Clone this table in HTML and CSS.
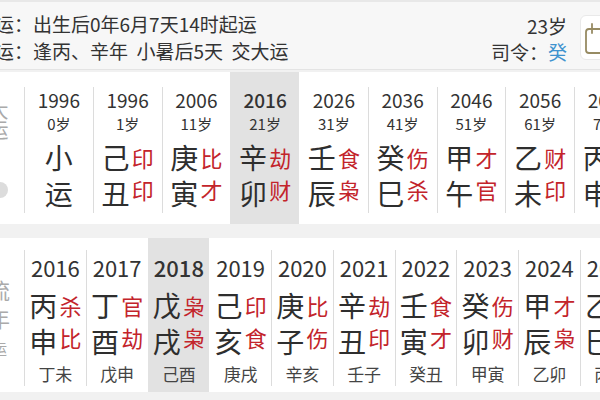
FILE: index.html
```html
<!DOCTYPE html>
<html lang="zh-CN">
<head>
<meta charset="utf-8">
<link rel="stylesheet" href="styles.css">
</head>
<body>
<header class="top">
  <div class="info">
    <div class="line">起运：出生后0年6月7天14时起运</div>
    <div class="line">交运：逢丙、辛年&nbsp;&nbsp;小暑后5天&nbsp;&nbsp;交大运</div>
  </div>
  <div class="meta">
    <div>23岁</div>
    <div>司令：<span class="blue">癸</span></div>
  </div>
  <div class="iconbox">
    <svg width="40" height="45" viewBox="0 0 40 45" fill="none" stroke="#978b63" stroke-width="1.8" stroke-linecap="round">
      <rect x="5" y="13" width="24" height="24" rx="3"/>
      <line x1="11" y1="8" x2="11" y2="17"/>
      <line x1="23" y1="8" x2="23" y2="17"/>
    </svg>
  </div>
</header>

<section class="card dayun">
  <div class="side"><span class="vt">大运</span><span class="dot"></span></div>
  <div class="col"><div class="in"><div class="yr">1996</div><div class="age">0岁</div><div class="gz"><span class="c">小</span></div><div class="gz"><span class="c">运</span></div></div></div>
  <div class="col"><div class="in"><div class="yr">1996</div><div class="age">1岁</div><div class="gz"><span class="c">己</span><span class="r">印</span></div><div class="gz lo"><span class="c">丑</span><span class="r">印</span></div></div></div>
  <div class="col"><div class="in"><div class="yr">2006</div><div class="age">11岁</div><div class="gz"><span class="c">庚</span><span class="r">比</span></div><div class="gz lo"><span class="c">寅</span><span class="r">才</span></div></div></div>
  <div class="col hl"><div class="in"><div class="yr">2016</div><div class="age">21岁</div><div class="gz"><span class="c">辛</span><span class="r">劫</span></div><div class="gz lo"><span class="c">卯</span><span class="r">财</span></div></div></div>
  <div class="col"><div class="in"><div class="yr">2026</div><div class="age">31岁</div><div class="gz"><span class="c">壬</span><span class="r">食</span></div><div class="gz lo"><span class="c">辰</span><span class="r">枭</span></div></div></div>
  <div class="col"><div class="in"><div class="yr">2036</div><div class="age">41岁</div><div class="gz"><span class="c">癸</span><span class="r">伤</span></div><div class="gz lo"><span class="c">巳</span><span class="r">杀</span></div></div></div>
  <div class="col"><div class="in"><div class="yr">2046</div><div class="age">51岁</div><div class="gz"><span class="c">甲</span><span class="r">才</span></div><div class="gz lo"><span class="c">午</span><span class="r">官</span></div></div></div>
  <div class="col"><div class="in"><div class="yr">2056</div><div class="age">61岁</div><div class="gz"><span class="c">乙</span><span class="r">财</span></div><div class="gz lo"><span class="c">未</span><span class="r">印</span></div></div></div>
  <div class="col"><div class="in"><div class="yr">2066</div><div class="age">71岁</div><div class="gz"><span class="c">丙</span><span class="r">杀</span></div><div class="gz lo"><span class="c">申</span><span class="r">比</span></div></div></div>
</section>

<section class="card liunian">
  <div class="side"><span class="vt">流年</span><span class="vs">运</span></div>
  <div class="col"><div class="in"><div class="yr">2016</div><div class="gz"><span class="c">丙</span><span class="r">杀</span></div><div class="gz lo"><span class="c">申</span><span class="r">比</span></div><div class="xy">丁未</div></div></div>
  <div class="col"><div class="in"><div class="yr">2017</div><div class="gz"><span class="c">丁</span><span class="r">官</span></div><div class="gz lo"><span class="c">酉</span><span class="r">劫</span></div><div class="xy">戊申</div></div></div>
  <div class="col hl"><div class="in"><div class="yr">2018</div><div class="gz"><span class="c">戊</span><span class="r">枭</span></div><div class="gz lo"><span class="c">戌</span><span class="r">枭</span></div><div class="xy">己酉</div></div></div>
  <div class="col"><div class="in"><div class="yr">2019</div><div class="gz"><span class="c">己</span><span class="r">印</span></div><div class="gz lo"><span class="c">亥</span><span class="r">食</span></div><div class="xy">庚戌</div></div></div>
  <div class="col"><div class="in"><div class="yr">2020</div><div class="gz"><span class="c">庚</span><span class="r">比</span></div><div class="gz lo"><span class="c">子</span><span class="r">伤</span></div><div class="xy">辛亥</div></div></div>
  <div class="col"><div class="in"><div class="yr">2021</div><div class="gz"><span class="c">辛</span><span class="r">劫</span></div><div class="gz lo"><span class="c">丑</span><span class="r">印</span></div><div class="xy">壬子</div></div></div>
  <div class="col"><div class="in"><div class="yr">2022</div><div class="gz"><span class="c">壬</span><span class="r">食</span></div><div class="gz lo"><span class="c">寅</span><span class="r">才</span></div><div class="xy">癸丑</div></div></div>
  <div class="col"><div class="in"><div class="yr">2023</div><div class="gz"><span class="c">癸</span><span class="r">伤</span></div><div class="gz lo"><span class="c">卯</span><span class="r">财</span></div><div class="xy">甲寅</div></div></div>
  <div class="col"><div class="in"><div class="yr">2024</div><div class="gz"><span class="c">甲</span><span class="r">才</span></div><div class="gz lo"><span class="c">辰</span><span class="r">枭</span></div><div class="xy">乙卯</div></div></div>
  <div class="col"><div class="in"><div class="yr">2025</div><div class="gz"><span class="c">乙</span><span class="r">财</span></div><div class="gz lo"><span class="c">巳</span><span class="r">杀</span></div><div class="xy">丙辰</div></div></div>
</section>
</body>
</html>
```

FILE: styles.css
```css
* { box-sizing: border-box; margin: 0; padding: 0; }

body {
  width: 600px;
  height: 400px;
  overflow: hidden;
  background: #f1f1f1;
  font-family: "Noto Sans CJK SC", "Noto Sans", sans-serif;
  color: #333;
}

.top {
  display: flex;
  align-items: flex-start;
  height: 70px;
  background: #f7f7f7;
  border-top: 2px solid #e8e8e8;
  border-bottom: 1px solid #e4e4e4;
}

.info {
  flex: 1;
  margin-left: -24px;
  padding-top: 8px;
  font-size: 19px;
  line-height: 27px;
  white-space: nowrap;
}

.meta {
  padding-top: 11px;
  font-size: 19px;
  line-height: 26px;
  text-align: right;
  white-space: nowrap;
}

.blue { color: #3f93cf; }

.iconbox {
  flex: 0 0 40px;
  width: 40px;
  height: 45px;
  margin-top: 13px;
  margin-left: 13px;
  margin-right: -20px;
  background: #fff;
  border: 1px solid #e9e9e9;
  border-radius: 6px;
}

.iconbox svg { display: block; }

.card {
  display: flex;
  background: #fff;
  white-space: nowrap;
}

.dayun { margin-top: 2px; }
.liunian { margin-top: 14px; }

.side {
  flex: 0 0 24px;
  overflow: hidden;
  display: flex;
  flex-direction: column;
  align-items: flex-start;
  color: #aaa;
}

.vt {
  writing-mode: vertical-rl;
  margin-left: -12px;
  font-size: 20px;
  line-height: 20px;
}

.dayun .vt { margin-top: 28px; }

.dot {
  display: block;
  width: 16px;
  height: 16px;
  margin-top: 42px;
  margin-left: -8px;
  border-radius: 50%;
  background: #dcdcdc;
}

.liunian .vt {
  margin-top: 42px;
  font-size: 22px;
  line-height: 22px;
  letter-spacing: 6px;
}

.vs {
  writing-mode: vertical-rl;
  margin-top: 6px;
  margin-left: -7px;
  font-size: 14px;
  line-height: 14px;
}

.col {
  flex: 0 0 68.75px;
  text-align: center;
}

.dayun .col { padding: 15px 0 11px; }
.liunian .col { flex-basis: 61.75px; padding: 12px 0 6px; }

.in {
  border-left: 1.5px solid #dcdcdc;
}

.dayun .in { padding: 1px 0 2px; }
.liunian .in { padding: 4px 0 0; }

.col.hl { background: #e2e2e2; }
.col.hl .in,
.col.hl + .col .in { border-left-color: transparent; }

.yr {
  font-size: 19px;
  line-height: 24px;
  color: #333;
}

.liunian .yr {
  font-size: 22px;
  line-height: 26px;
}

.hl .yr { font-weight: 500; }

.age {
  font-size: 15px;
  line-height: 24px;
  color: #333;
}

.gz {
  display: flex;
  justify-content: center;
  align-items: center;
  height: 36px;
}

.dayun .age + .gz { margin-top: 3px; }
.liunian .yr + .gz { margin-top: 7px; }

.c {
  font-size: 28px;
  line-height: 30px;
  color: #2e2e2e;
}

.r {
  margin-left: 2px;
  font-size: 22px;
  line-height: 22px;
  color: #c3242b;
}

.lo .r { margin-bottom: 8px; }

.xy {
  margin-top: 3px;
  font-size: 17px;
  line-height: 24px;
  color: #444;
}
```
